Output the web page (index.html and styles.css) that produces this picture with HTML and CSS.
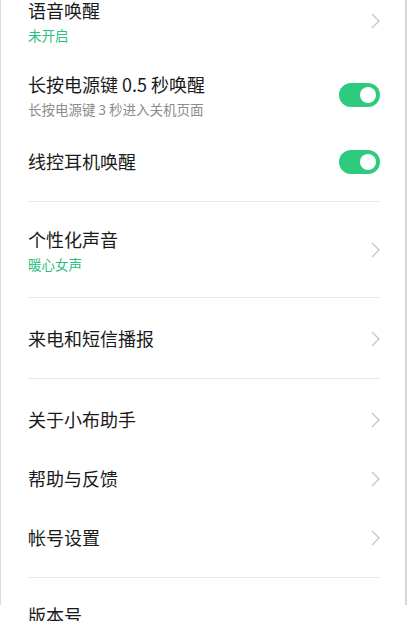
FILE: index.html
```html
<!DOCTYPE html>
<html lang="zh-CN">
<head>
  <meta charset="UTF-8">
  <meta name="viewport" content="width=device-width, initial-scale=1.0">
  <title>小布助手设置</title>
  <link rel="stylesheet" href="styles.css">
</head>
<body>

  <div class="settings">

    <section class="group group-first">
      <div class="row row-two">
        <div class="text">
          <div class="title">语音唤醒</div>
          <div class="sub sub-green">未开启</div>
        </div>
        <svg class="chevron" viewBox="0 0 9 16"><polyline points="1,1 8,8 1,15"/></svg>
      </div>

      <div class="row row-two">
        <div class="text">
          <div class="title">长按电源键 0.5 秒唤醒</div>
          <div class="sub">长按电源键 3 秒进入关机页面</div>
        </div>
        <span class="switch on"><span class="knob"></span></span>
      </div>

      <div class="row">
        <div class="text">
          <div class="title">线控耳机唤醒</div>
        </div>
        <span class="switch on"><span class="knob"></span></span>
      </div>
    </section>

    <section class="group">
      <div class="row row-two">
        <div class="text">
          <div class="title">个性化声音</div>
          <div class="sub sub-green">暖心女声</div>
        </div>
        <svg class="chevron" viewBox="0 0 9 16"><polyline points="1,1 8,8 1,15"/></svg>
      </div>
    </section>

    <section class="group">
      <div class="row">
        <div class="text">
          <div class="title">来电和短信播报</div>
        </div>
        <svg class="chevron" viewBox="0 0 9 16"><polyline points="1,1 8,8 1,15"/></svg>
      </div>
    </section>

    <section class="group">
      <div class="row">
        <div class="text">
          <div class="title">关于小布助手</div>
        </div>
        <svg class="chevron" viewBox="0 0 9 16"><polyline points="1,1 8,8 1,15"/></svg>
      </div>
      <div class="row">
        <div class="text">
          <div class="title">帮助与反馈</div>
        </div>
        <svg class="chevron" viewBox="0 0 9 16"><polyline points="1,1 8,8 1,15"/></svg>
      </div>
      <div class="row">
        <div class="text">
          <div class="title">帐号设置</div>
        </div>
        <svg class="chevron" viewBox="0 0 9 16"><polyline points="1,1 8,8 1,15"/></svg>
      </div>
    </section>

    <section class="group group-last">
      <div class="row">
        <div class="text">
          <div class="title">版本号</div>
        </div>
      </div>
    </section>

  </div>

</body>
</html>
```

FILE: styles.css
```css
html, body {
  margin: 0;
  padding: 0;
  height: 100%;
  overflow: hidden;
}

body {
  font-family: "Noto Sans CJK SC", "Noto Sans", sans-serif;
  background-color: #fff;
  color: #1a1a1a;
}

.settings {
  box-sizing: border-box;
  width: 407px;
  height: 100%;
  border-left: 1px solid #dcdcdc;
  border-right: 2px solid #d6d6d6;
  padding: 0 25px 0 27px;
}

.group {
  border-top: 1px solid #e8e8e8;
  padding: 11px 0 10px;
}

/* page is scrolled a little, first row is cut at the top */
.group-first {
  border-top: none;
  margin-top: -16px;
  padding: 0 0 10px;
}

.group-last {
  padding-top: 8px;
}

.row {
  display: flex;
  align-items: center;
  justify-content: space-between;
  height: 59px;
}

.row-two {
  height: 74px;
}

.title {
  font-size: 18px;
  line-height: 25px;
}

.sub {
  margin-top: 3px;
  font-size: 13.5px;
  line-height: 18px;
  color: #8c8c8c;
}

.sub-green {
  color: #2cc07f;
}

.chevron {
  width: 9px;
  height: 16px;
  fill: none;
  stroke: #c6c6c6;
  stroke-width: 1.4;
}

.switch {
  position: relative;
  width: 41px;
  height: 24px;
  border-radius: 12px;
  background-color: #d0d0d0;
}

.switch.on {
  background-color: #2ecb7f;
}

.knob {
  position: absolute;
  top: 4px;
  right: 4px;
  width: 16px;
  height: 16px;
  border-radius: 50%;
  background-color: #fff;
}
```
